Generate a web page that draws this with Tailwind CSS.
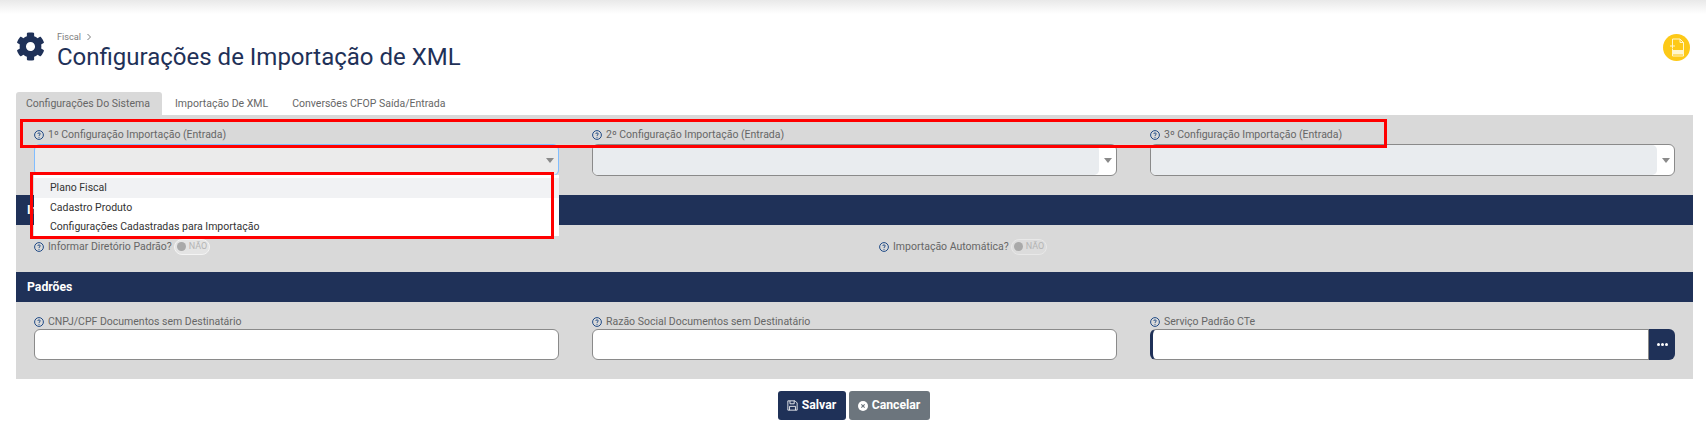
<!DOCTYPE html>
<html lang="pt-BR">
<head>
<meta charset="utf-8">
<script src="https://cdn.jsdelivr.net/npm/@tailwindcss/browser@4"></script>
</head>
<body class="relative w-[1706px] h-[439px] overflow-hidden bg-white font-[Roboto,sans-serif]">
  <div class="h-[14px] bg-linear-to-b from-[#e9e9e9] to-white"></div>

  <header class="h-[78px] px-[16px] flex justify-between">
    <div class="flex items-start">
      <svg class="w-[29px] h-[29px] mt-[18px] fill-[#1f3158]" viewBox="0 0 512 512"><path d="M487.4 315.7l-42.6-24.6c4.3-23.2 4.3-47 0-70.2l42.6-24.6c4.9-2.8 7.1-8.6 5.5-14-11.1-35.6-30-67.8-54.7-94.6-3.8-4.1-10-5.1-14.8-2.3L380.8 110c-17.9-15.4-38.5-27.3-60.8-35.1V25.8c0-5.6-3.9-10.5-9.4-11.7-36.7-8.2-74.3-7.8-109.2 0-5.5 1.2-9.4 6.1-9.4 11.7V75c-22.2 7.9-42.8 19.8-60.8 35.1L88.7 85.5c-4.9-2.8-11-1.9-14.8 2.3-24.7 26.7-43.6 58.9-54.7 94.6-1.7 5.4.6 11.2 5.5 14L67.3 221c-4.3 23.2-4.3 47 0 70.2l-42.6 24.6c-4.9 2.8-7.1 8.6-5.5 14 11.1 35.6 30 67.8 54.7 94.6 3.8 4.1 10 5.1 14.8 2.3l42.6-24.6c17.9 15.4 38.5 27.3 60.8 35.1v49.2c0 5.6 3.9 10.5 9.4 11.7 36.7 8.2 74.3 7.8 109.2 0 5.5-1.2 9.4-6.1 9.4-11.7v-49.2c22.2-7.9 42.8-19.8 60.8-35.1l42.6 24.6c4.9 2.8 11 1.9 14.8-2.3 24.7-26.7 43.6-58.9 54.7-94.6 1.5-5.5-.7-11.3-5.6-14.1zM256 336c-44.1 0-80-35.9-80-80s35.9-80 80-80 80 35.9 80 80-35.9 80-80 80z"/></svg>
      <div class="ml-[12px] mt-[17px]">
        <div class="flex items-center h-[12px] text-[9.2px] leading-[12px] text-[#7d7d7d]">Fiscal
          <svg class="w-[8px] h-[8px] ml-[4px] stroke-[#7d7d7d] fill-none" viewBox="0 0 8 8"><path d="M2.5 1 L5.5 4 L2.5 7" stroke-width="1"/></svg>
        </div>
        <h1 class="text-[24px] leading-[28px] font-normal text-[#1f3158]">Configurações de Importação de XML</h1>
      </div>
    </div>
    <div class="mt-[20px] w-[27px] h-[27px] rounded-full bg-[#fdc917] flex items-center justify-center">
      <svg class="w-[16px] h-[19px] fill-none stroke-[#fff6cc]" viewBox="0 0 16 19" stroke-width="1"><path d="M3.5 6 V1 H11 L14.5 4.5 V18 H3.5 V11"/><path d="M11 1 V4.5 H14.5"/><path d="M1 8 H6 M3.5 5.5 V10.5"/><rect x="3.5" y="12.5" width="11" height="3.5" fill="#fff6cc"/></svg>
    </div>
  </header>

  <nav class="flex h-[23px] pl-[16px] text-[10.5px] leading-[23px] text-[#666]">
    <div class="w-[146px] pl-[10px] bg-[#d9d9d9] rounded-t-[3px]">Configurações Do Sistema</div>
    <div class="pl-[13px]">Importação De XML</div>
    <div class="pl-[24px]">Conversões CFOP Saída/Entrada</div>
  </nav>

  <main class="relative mx-[16px] w-[1677px] h-[264px] bg-[#d9d9d9]">
    <div class="h-[80px] pt-[13px] px-[18px] grid grid-cols-3 gap-x-[33px]">
      <div>
        <label class="flex items-center h-[14px] text-[10.5px] text-[#666]">
          <svg class="w-[10px] h-[10px] mr-[4px] fill-none stroke-[#1f4a86]" viewBox="0 0 10 10"><circle cx="5" cy="5" r="4.4"/><path d="M3.8 3.9 C3.8 2.5 6.2 2.5 6.2 3.9 C6.2 4.9 5 4.8 5 5.9 M5 6.9 V7.8"/></svg>1º Configuração Importação (Entrada)</label>
        <div class="relative mt-[2px] h-[32px] rounded-[6px] border border-[#80bdff] bg-[#ebebeb]">
          <span class="absolute right-[4px] top-[13px] w-0 h-0 border-x-[4px] border-x-transparent border-t-[5px] border-t-[#8a8a8a]"></span>
        </div>
      </div>
      <div>
        <label class="flex items-center h-[14px] text-[10.5px] text-[#666]">
          <svg class="w-[10px] h-[10px] mr-[4px] fill-none stroke-[#1f4a86]" viewBox="0 0 10 10"><circle cx="5" cy="5" r="4.4"/><path d="M3.8 3.9 C3.8 2.5 6.2 2.5 6.2 3.9 C6.2 4.9 5 4.8 5 5.9 M5 6.9 V7.8"/></svg>2º Configuração Importação (Entrada)</label>
        <div class="relative mt-[2px] h-[32px] rounded-[6px] border border-[#8a8a8a] bg-white">
          <div class="absolute left-0 top-0 bottom-0 right-[17px] rounded-[5px] bg-[#e9ecef]"></div>
          <span class="absolute right-[4px] top-[13px] w-0 h-0 border-x-[4px] border-x-transparent border-t-[5px] border-t-[#8a8a8a]"></span>
        </div>
      </div>
      <div>
        <label class="flex items-center h-[14px] text-[10.5px] text-[#666]">
          <svg class="w-[10px] h-[10px] mr-[4px] fill-none stroke-[#1f4a86]" viewBox="0 0 10 10"><circle cx="5" cy="5" r="4.4"/><path d="M3.8 3.9 C3.8 2.5 6.2 2.5 6.2 3.9 C6.2 4.9 5 4.8 5 5.9 M5 6.9 V7.8"/></svg>3º Configuração Importação (Entrada)</label>
        <div class="relative mt-[2px] h-[32px] rounded-[6px] border border-[#8a8a8a] bg-white">
          <div class="absolute left-0 top-0 bottom-0 right-[17px] rounded-[5px] bg-[#e9ecef]"></div>
          <span class="absolute right-[4px] top-[13px] w-0 h-0 border-x-[4px] border-x-transparent border-t-[5px] border-t-[#8a8a8a]"></span>
        </div>
      </div>
    </div>

    <div class="h-[30px] bg-[#1f3158] pl-[11px] text-[12.25px] leading-[30px] font-bold text-white">Informações</div>

    <div class="h-[47px] px-[18px] pt-[13px] grid grid-cols-2 gap-x-[49px]">
      <div class="flex items-center h-[17px] text-[10.5px] text-[#666]">
        <svg class="w-[10px] h-[10px] mr-[4px] fill-none stroke-[#1f4a86]" viewBox="0 0 10 10"><circle cx="5" cy="5" r="4.4"/><path d="M3.8 3.9 C3.8 2.5 6.2 2.5 6.2 3.9 C6.2 4.9 5 4.8 5 5.9 M5 6.9 V7.8"/></svg>Informar Diretório Padrão?
        <div class="ml-[2px] w-[36px] h-[16px] rounded-full border border-[#f4f4f4] bg-[#e4e4e4] flex items-center pl-[2px] text-[9px] text-[#b5b5b5]"><span class="w-[9px] h-[9px] rounded-full bg-[#a9a9a9] mr-[3px]"></span>NÃO</div>
      </div>
      <div class="flex items-center h-[17px] text-[10.5px] text-[#666]">
        <svg class="w-[10px] h-[10px] mr-[4px] fill-none stroke-[#1f4a86]" viewBox="0 0 10 10"><circle cx="5" cy="5" r="4.4"/><path d="M3.8 3.9 C3.8 2.5 6.2 2.5 6.2 3.9 C6.2 4.9 5 4.8 5 5.9 M5 6.9 V7.8"/></svg>Importação Automática?
        <div class="ml-[2px] w-[36px] h-[16px] rounded-full border border-[#e8e8e8] bg-[#dcdcdc] flex items-center pl-[2px] text-[9px] text-[#b5b5b5]"><span class="w-[9px] h-[9px] rounded-full bg-[#a9a9a9] mr-[3px]"></span>NÃO</div>
      </div>
    </div>

    <div class="h-[30px] bg-[#1f3158] pl-[11px] text-[12.25px] leading-[30px] font-bold text-white">Padrões</div>

    <div class="pt-[13px] px-[18px] grid grid-cols-3 gap-x-[33px]">
      <div>
        <label class="flex items-center h-[14px] text-[10.5px] text-[#666]">
          <svg class="w-[10px] h-[10px] mr-[4px] fill-none stroke-[#1f4a86]" viewBox="0 0 10 10"><circle cx="5" cy="5" r="4.4"/><path d="M3.8 3.9 C3.8 2.5 6.2 2.5 6.2 3.9 C6.2 4.9 5 4.8 5 5.9 M5 6.9 V7.8"/></svg>CNPJ/CPF Documentos sem Destinatário</label>
        <div class="h-[31px] rounded-[6px] border border-[#8a8a8a] bg-white"></div>
      </div>
      <div>
        <label class="flex items-center h-[14px] text-[10.5px] text-[#666]">
          <svg class="w-[10px] h-[10px] mr-[4px] fill-none stroke-[#1f4a86]" viewBox="0 0 10 10"><circle cx="5" cy="5" r="4.4"/><path d="M3.8 3.9 C3.8 2.5 6.2 2.5 6.2 3.9 C6.2 4.9 5 4.8 5 5.9 M5 6.9 V7.8"/></svg>Razão Social Documentos sem Destinatário</label>
        <div class="h-[31px] rounded-[6px] border border-[#8a8a8a] bg-white"></div>
      </div>
      <div>
        <label class="flex items-center h-[14px] text-[10.5px] text-[#666]">
          <svg class="w-[10px] h-[10px] mr-[4px] fill-none stroke-[#1f4a86]" viewBox="0 0 10 10"><circle cx="5" cy="5" r="4.4"/><path d="M3.8 3.9 C3.8 2.5 6.2 2.5 6.2 3.9 C6.2 4.9 5 4.8 5 5.9 M5 6.9 V7.8"/></svg>Serviço Padrão CTe</label>
        <div class="flex h-[31px]">
          <div class="flex-1 rounded-l-[6px] border border-[#8a8a8a] border-l-[3px] border-l-[#1f3158] bg-white"></div>
          <div class="w-[26px] rounded-r-[6px] bg-[#1f3158] flex items-center justify-center gap-[1px]">
            <span class="w-[3px] h-[3px] rounded-full bg-white"></span><span class="w-[3px] h-[3px] rounded-full bg-white"></span><span class="w-[3px] h-[3px] rounded-full bg-white"></span>
          </div>
        </div>
      </div>
    </div>

    <ul class="absolute left-[18px] top-[60px] w-[525px] h-[61px] pt-[3px] bg-white text-[10.5px] text-[#333]">
      <li class="h-[20px] pl-[16px] leading-[20px] bg-[#f1f2f4]">Plano Fiscal</li>
      <li class="h-[20px] pl-[16px] leading-[20px]">Cadastro Produto</li>
      <li class="h-[18px] pl-[16px] leading-[18px]">Configurações Cadastradas para Importação</li>
    </ul>
    <div class="absolute left-[4px] top-[4px] w-[1367px] h-[29px] border-[3px] border-[#f00]"></div>
    <div class="absolute left-[14px] top-[57px] w-[524px] h-[67px] border-[3px] border-[#f00]"></div>
  </main>

  <footer class="mt-[12px] flex justify-center gap-[3px] pl-[1px] text-[12.25px] font-bold text-white">
    <button class="h-[29px] w-[68px] rounded-[3px] bg-[#1f3158] flex items-center justify-center gap-[4px]">
      <svg class="w-[11px] h-[11px] fill-none stroke-white" viewBox="0 0 13 13"><path d="M1 1 H9.5 L12 3.5 V12 H1 Z"/><path d="M3.5 1 V4.5 H8.5 V1"/><path d="M3 12 V7.5 H10 V12"/></svg>Salvar
    </button>
    <button class="h-[29px] w-[81px] rounded-[3px] bg-[#6c757d] flex items-center justify-center gap-[4px]">
      <svg class="w-[10px] h-[10px]" viewBox="0 0 12 12"><circle cx="6" cy="6" r="6" fill="#fff"/><path d="M4 4 L8 8 M8 4 L4 8" stroke="#6c757d" stroke-width="1.3"/></svg>Cancelar
    </button>
  </footer>
</body>
</html>
